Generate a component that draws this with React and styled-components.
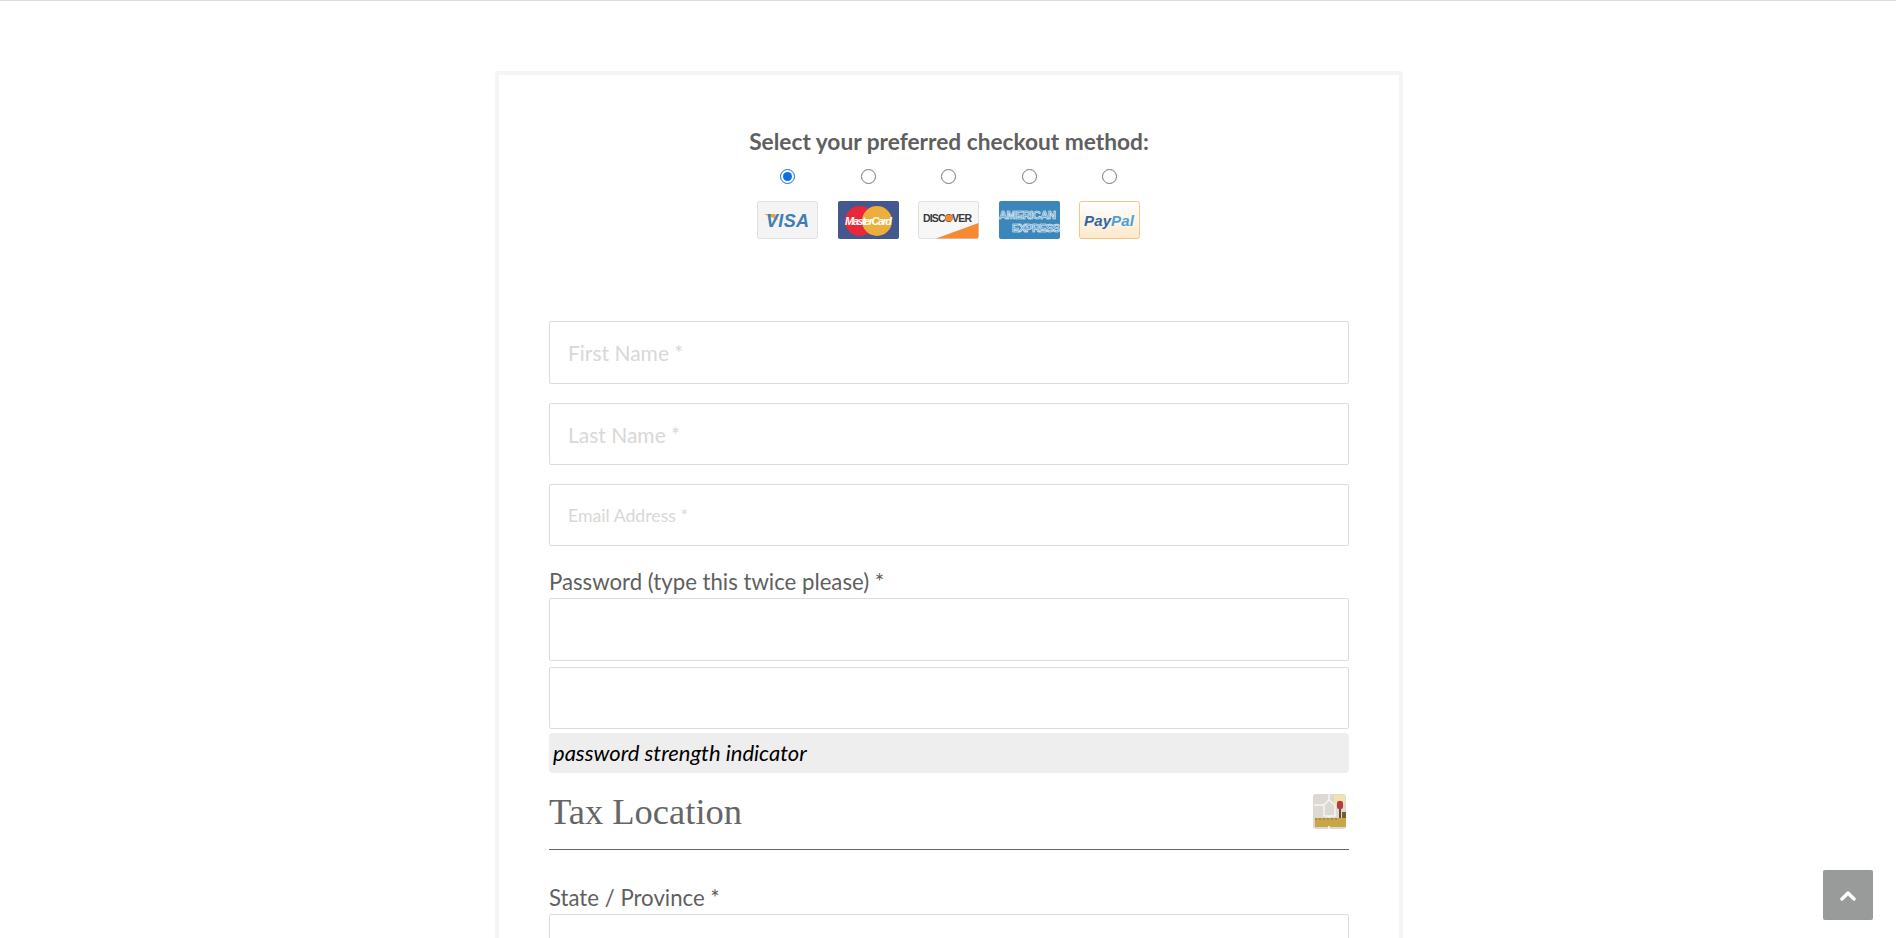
import React from "react";
import styled, { createGlobalStyle } from "styled-components";

const Global = createGlobalStyle`
  html, body {
    margin: 0;
    height: 938px;
    overflow: hidden;
    background: #fff;
    font-family: Lato, "Open Sans", sans-serif;
    color: #5f5f5f;
  }
  * { box-sizing: border-box; }
`;

const Page = styled.div`
  height: 938px;
  overflow: hidden;
  border-top: 1px solid #dedede;
  padding-top: 70px;
`;

const Card = styled.form`
  width: 908px;
  margin: 0 0 0 495px;
  padding: 51px 50px 0;
  border: 4px solid #f5f5f5;
  border-bottom: 0;
  border-radius: 4px 4px 0 0;
  min-height: 900px;
`;

const Title = styled.h3`
  margin: 0;
  font-size: 22.7px;
  font-weight: 700;
  line-height: 32px;
  text-align: center;
  color: #5f5f5f;
`;

const Methods = styled.div`
  display: flex;
  justify-content: center;
  gap: 19.5px;
  margin: 6px 1px 73px 0;
`;

const Method = styled.label`
  display: flex;
  flex-direction: column;
  align-items: center;
  width: 61px;
  height: 84px;
  gap: 17px;
`;

const Radio = styled.input`
  width: 15px;
  height: 15px;
  margin: 5px 0 0;
  accent-color: #0b6fe8;
`;

const Logo = styled.svg`
  display: block;
  width: 61px;
  height: 38px;
`;

const Input = styled.input`
  display: block;
  width: 100%;
  height: ${(p) => p.$h || 63}px;
  margin-bottom: ${(p) => p.$mb ?? 19}px;
  padding: 0 18px;
  background: #fff;
  border: 1px solid #dcdcdc;
  border-radius: 2px;
  outline: none;
  font-family: inherit;
  font-size: ${(p) => p.$size || 21}px;
  &::placeholder {
    color: #d9d8d6;
    opacity: 1;
  }
`;

const Label = styled.label`
  display: block;
  font-size: 22.2px;
  line-height: 33px;
  color: #5f5f5f;
`;

const Strength = styled.div`
  height: 40px;
  margin-top: -2px;
  padding: 0 4px;
  background: #eeeeee;
  border-radius: 4px;
  font-size: 22px;
  font-style: italic;
  line-height: 40px;
  color: #000;
`;

const SectionHead = styled.div`
  display: flex;
  align-items: center;
  justify-content: space-between;
  height: 77px;
  margin-bottom: 31px;
  padding: 0 3px 0 0;
  border-bottom: 1px solid #666;
`;

const SectionTitle = styled.h2`
  margin: 0;
  font-family: "Liberation Serif", Georgia, serif;
  font-size: 36.5px;
  font-weight: 400;
  color: #666;
`;

const TopButton = styled.button`
  position: fixed;
  right: 23px;
  bottom: 18px;
  width: 50px;
  height: 50px;
  display: flex;
  align-items: center;
  justify-content: center;
  padding: 0;
  border: 0;
  border-radius: 2px;
  background: #999b9a;
`;

const LogoText = styled.text`
  font-family: "Liberation Sans", sans-serif;
  font-weight: 700;
  font-style: ${(p) => (p.$italic ? "italic" : "normal")};
`;

const Visa = () => (
  <Logo viewBox="0 0 61 38">
    <rect x="0.5" y="0.5" width="60" height="37" rx="2" fill="#f4f4f4" stroke="#e0e0e0" />
    <path d="M7 13h11l3 6z" fill="#e8a33c" />
    <LogoText $italic x="9" y="26" fontSize="18" fill="#3d7fb5" textLength="43">VISA</LogoText>
  </Logo>
);

const MasterCard = () => (
  <Logo viewBox="0 0 61 38">
    <rect width="61" height="38" rx="2" fill="#44578f" />
    <circle cx="22" cy="20" r="15" fill="#e8283a" />
    <circle cx="39" cy="20" r="15" fill="#eeae3c" />
    <LogoText $italic x="7" y="24" fontSize="11" fill="#fff" textLength="47">MasterCard</LogoText>
  </Logo>
);

const Discover = () => (
  <Logo viewBox="0 0 61 38">
    <rect x="0.5" y="0.5" width="60" height="37" rx="2" fill="#f7f7f7" stroke="#e0e0e0" />
    <path d="M18 37.5 60.5 22v13.5a2 2 0 0 1-2 2z" fill="#f58a33" />
    <LogoText x="5" y="21" fontSize="10.5" fill="#3a3a3a" textLength="49">DISCOVER</LogoText>
    <circle cx="31" cy="17" r="3.6" fill="#f58a33" />
  </Logo>
);

const Amex = () => (
  <Logo viewBox="0 0 61 38">
    <rect width="61" height="38" rx="2" fill="#3b86ba" />
    <LogoText x="0" y="18" fontSize="11" fill="#4f93c2" stroke="#f2f7fb" strokeWidth="0.6" textLength="57">AMERICAN</LogoText>
    <LogoText x="13" y="31" fontSize="11" fill="#4f93c2" stroke="#f2f7fb" strokeWidth="0.6" textLength="48">EXPRESS</LogoText>
  </Logo>
);

const PayPal = () => (
  <Logo viewBox="0 0 61 38">
    <defs>
      <linearGradient id="pp" x1="0" y1="0" x2="0" y2="1">
        <stop offset="0" stopColor="#ffffff" />
        <stop offset="1" stopColor="#fde9cc" />
      </linearGradient>
    </defs>
    <rect x="0.5" y="0.5" width="60" height="37" rx="2" fill="url(#pp)" stroke="#f5c383" />
    <LogoText $italic x="5" y="25" fontSize="15" fill="#2f66a8" textLength="27">Pay</LogoText>
    <LogoText $italic x="32" y="25" fontSize="15" fill="#4b9fd8" textLength="23">Pal</LogoText>
  </Logo>
);

const TaxIcon = () => (
  <svg width="33" height="35" viewBox="0 0 33 35" style={{ display: "block" }}>
    <rect width="33" height="35" rx="3" fill="#dcd9d2" />
    <rect x="21" y="1" width="11" height="9" fill="#f3e2ad" />
    <path d="M1 11h10M11 22V11l5-5 6 5v11zM16 0v6M16 22v3" stroke="#f6f5f2" strokeWidth="1.5" fill="none" />
    <rect x="24" y="7" width="6" height="8" rx="2" fill="#b83a3f" />
    <rect x="26" y="15" width="2" height="9" fill="#6b4a2a" />
    <rect x="29" y="18" width="4" height="6" fill="#7a5a35" />
    <path d="M2 24h31v9H2z" fill="#c8a645" />
    <path d="M2 25h24" stroke="#8f7430" strokeDasharray="2 2" />
    <path d="M16 32v3" stroke="#f6f5f2" strokeWidth="1.5" />
  </svg>
);

const methods = [Visa, MasterCard, Discover, Amex, PayPal];

export default function App() {
  return (
    <>
      <Global />
      <Page>
        <Card>
          <Title>Select your preferred checkout method:</Title>
          <Methods>
            {methods.map((Art, i) => (
              <Method key={i}>
                <Radio type="radio" name="method" defaultChecked={i === 0} />
                <Art />
              </Method>
            ))}
          </Methods>
          <Input placeholder="First Name *" />
          <Input placeholder="Last Name *" $h={62} />
          <Input placeholder="Email Address *" $size={17.7} $h={62} />
          <Label>Password (type this twice please) *</Label>
          <Input type="password" $mb={6} />
          <Input type="password" $h={62} $mb={6} />
          <Strength>password strength indicator</Strength>
          <SectionHead>
            <SectionTitle>Tax Location</SectionTitle>
            <TaxIcon />
          </SectionHead>
          <Label>State / Province *</Label>
          <Input />
        </Card>
        <TopButton type="button" aria-label="Back to top">
          <svg width="16" height="11" viewBox="0 0 16 11">
            <path d="M2 9l6-6 6 6" fill="none" stroke="#fff" strokeWidth="3.4" strokeLinecap="round" strokeLinejoin="round" />
          </svg>
        </TopButton>
      </Page>
    </>
  );
}
